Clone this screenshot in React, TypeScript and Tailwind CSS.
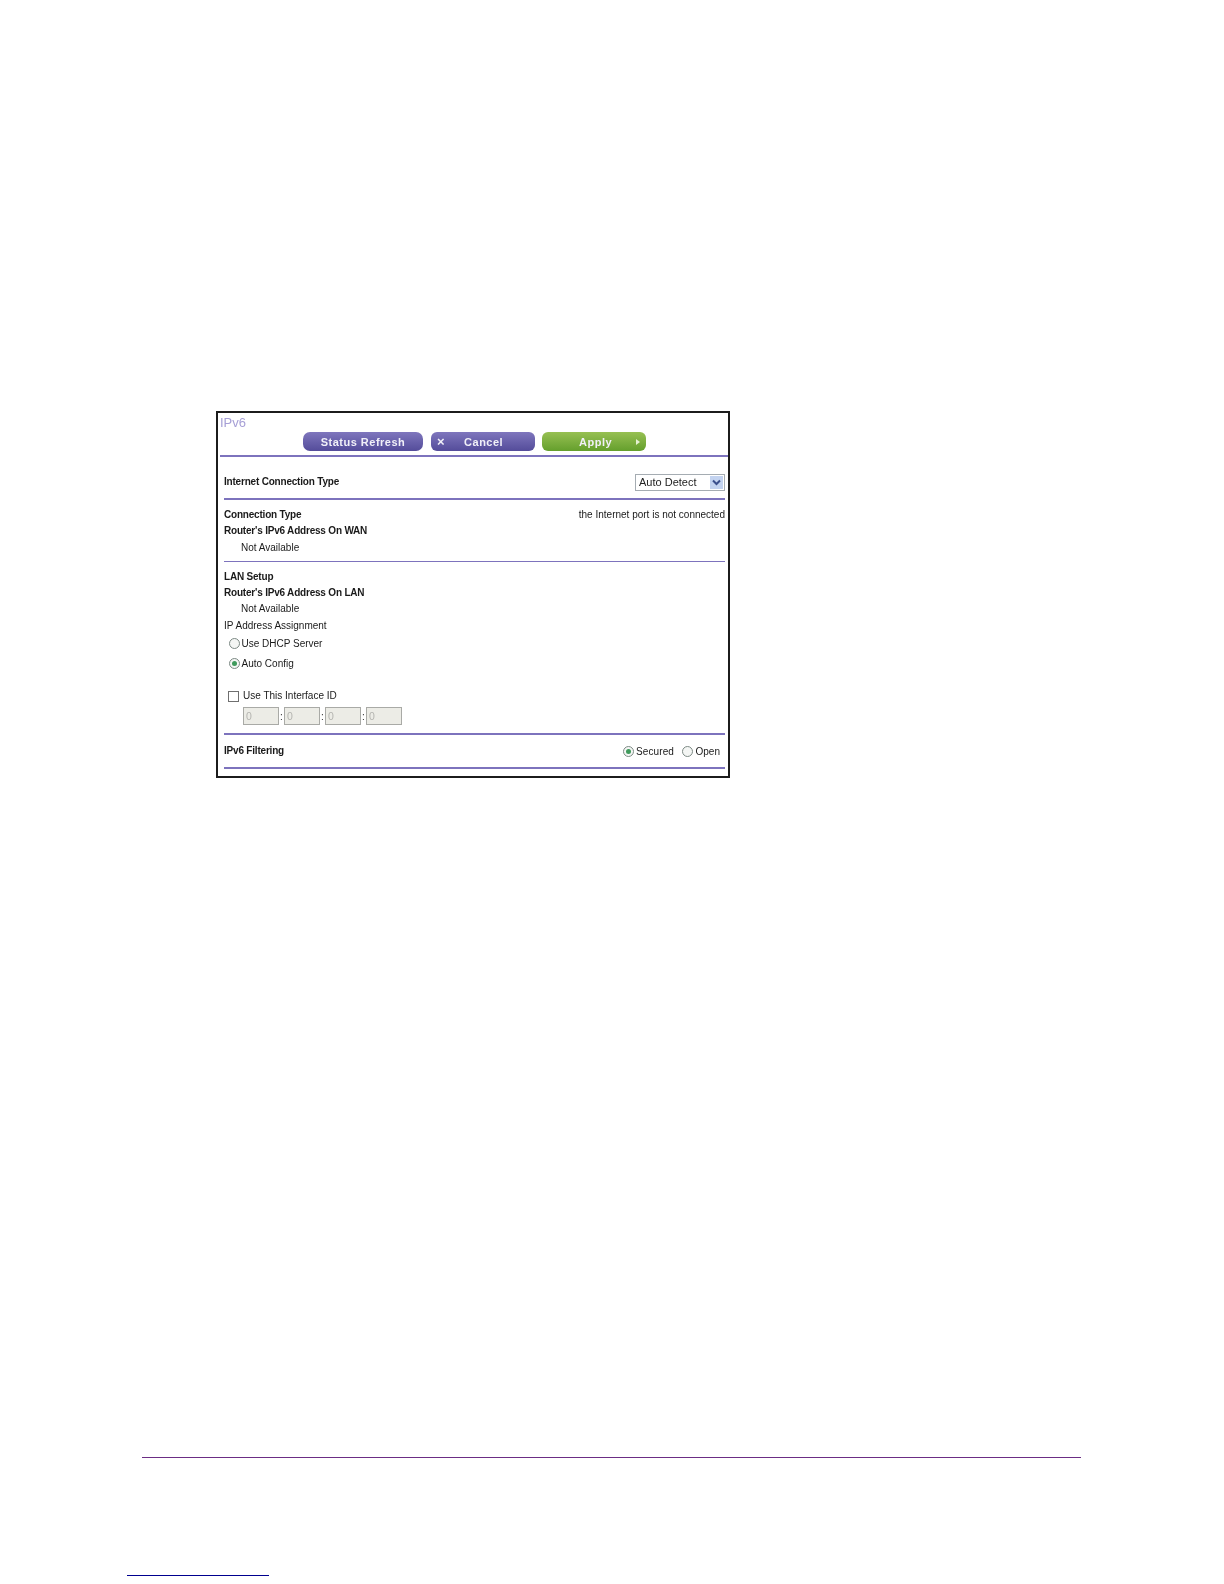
import React from "react";

const Label = ({ children, bold }: { children: React.ReactNode; bold?: boolean }) => (
  <div className={`h-[16.3px] leading-[16.3px] text-[10px] whitespace-nowrap text-[#1a1a1a] ${bold ? "font-bold tracking-[-0.2px]" : ""}`}>{children}</div>
);

const Radio = ({ checked }: { checked?: boolean }) => (
  <span className="mb-[1px] flex h-[11px] w-[11px] shrink-0 items-center justify-center rounded-full border border-[#7d8a85] bg-[#f4f6f4]">
    {checked && <span className="h-[5px] w-[5px] rounded-full bg-[#3f9a5c]" />}
  </span>
);

const App = () => {
  return (
    <div className="h-[1584px] w-[1224px] overflow-hidden bg-white pt-[411px] font-['Liberation_Sans',Arial,sans-serif]">
      {/* screenshot in the page */}
      <div className="ml-[216px] h-[367px] w-[514px] border-2 border-[#1c1c1c] bg-white blur-[0.3px]">
        <div className="h-[19px] pl-[2px] text-[13px] leading-[19px] text-[#a69fd6]">IPv6</div>
        <div className="flex h-[19px] text-[11px] font-bold tracking-[0.5px] text-[#f1f0f8]">
          <div className="ml-[85px] flex w-[120px] items-center justify-center rounded-[7px] bg-gradient-to-b from-[#7f76bd] to-[#544c9a] pt-[1px]">Status Refresh</div>
          <div className="ml-[8px] flex w-[104px] items-center rounded-[6px] bg-gradient-to-b from-[#7f76bd] to-[#544c9a] pl-[6px] pt-[1px]">
            <span className="text-[13px]">×</span>
            <span className="ml-[19px]">Cancel</span>
          </div>
          <div className="ml-[7px] flex w-[104px] items-center rounded-[6px] bg-gradient-to-b from-[#97c052] to-[#649f2c] pl-[37px] pt-[1px]">
            <span>Apply</span>
            <span className="ml-[24px] h-0 w-0 border-y-[3px] border-l-[4px] border-y-transparent border-l-[#e6f1d2]" />
          </div>
        </div>
        <div className="ml-[2px] mt-[4px] h-[2px] bg-[#7d73bd]" />

        <div className="ml-[6px] mr-[3px]">
          <div className="flex h-[41px] items-center justify-between pt-[9px]">
            <Label bold>Internet Connection Type</Label>
            <div className="flex h-[17px] w-[90px] items-center justify-between border border-[#a5acb2] bg-white pl-[3px] pr-[1px] text-[11px] text-[#222]">
              <span>Auto Detect</span>
              <span className="flex h-[13px] w-[13px] items-center justify-center bg-[#c3d3f0]">
                <svg width="9" height="7" viewBox="0 0 9 7"><path d="M1 1.5 L4.5 5 L8 1.5" fill="none" stroke="#3b4f8c" strokeWidth="2" /></svg>
              </span>
            </div>
          </div>
          <div className="h-[2px] bg-[#7d73bd]" />

          <div className="pt-[7px]">
            <div className="flex justify-between">
              <Label bold>Connection Type</Label>
              <Label>the Internet port is not connected</Label>
            </div>
            <Label bold>Router's IPv6 Address On WAN</Label>
            <div className="pl-[17px]"><Label>Not Available</Label></div>
          </div>
          <div className="mt-[5px] h-px bg-[#7d73bd]" />

          <div className="pt-[7px]">
            <Label bold>LAN Setup</Label>
            <Label bold>Router's IPv6 Address On LAN</Label>
            <div className="pl-[17px]"><Label>Not Available</Label></div>
            <Label>IP Address Assignment</Label>
            <div className="flex h-[20px] items-center gap-[1.5px] pl-[5px]"><Radio /><div className="pt-[1px]"><Label>Use DHCP Server</Label></div></div>
            <div className="flex h-[20px] items-center gap-[1.5px] pl-[5px]"><Radio checked /><div className="pt-[1px]"><Label>Auto Config</Label></div></div>
            <div className="mt-[12px] flex h-[20px] items-center gap-[4px] pl-[4px]">
              <span className="h-[11px] w-[11px] border border-[#6f6f6f] bg-white" />
              <Label>Use This Interface ID</Label>
            </div>
            <div className="mt-[1px] flex h-[18px] items-center pl-[19px]">
              {[0, 1, 2, 3].map((i) => (
                <React.Fragment key={i}>
                  {i > 0 && <span className="w-[5px] text-center text-[10px] text-[#333]">:</span>}
                  <input readOnly value="0" className="h-[18px] w-[36px] border border-[#a9aaa6] bg-[#ececE6] pl-[2px] text-[10.5px] text-[#b4b4b0]" />
                </React.Fragment>
              ))}
            </div>
          </div>
          <div className="mt-[8px] h-[2px] bg-[#7d73bd]" />

          <div className="flex h-[32px] items-center justify-between">
            <div className="pt-[0px]"><Label bold>IPv6 Filtering</Label></div>
            <div className="flex items-center pr-[5px] pt-[1px]">
              <Radio checked />
              <span className="ml-[2px] pt-[1px] tracking-[0.1px]"><Label>Secured</Label></span>
              <span className="ml-[8px]"><Radio /></span>
              <span className="ml-[2.5px] pt-[1px]"><Label>Open</Label></span>
            </div>
          </div>
          <div className="h-[2px] bg-[#7d73bd]" />
        </div>
      </div>

      {/* page footer rule */}
      <div className="ml-[142px] mt-[679px] h-px w-[939px] bg-[#6b2d84]" />
      <div className="ml-[127px] mt-[117px] h-px w-[142px] bg-[#00008f]" />
    </div>
  );
};

export default App;
